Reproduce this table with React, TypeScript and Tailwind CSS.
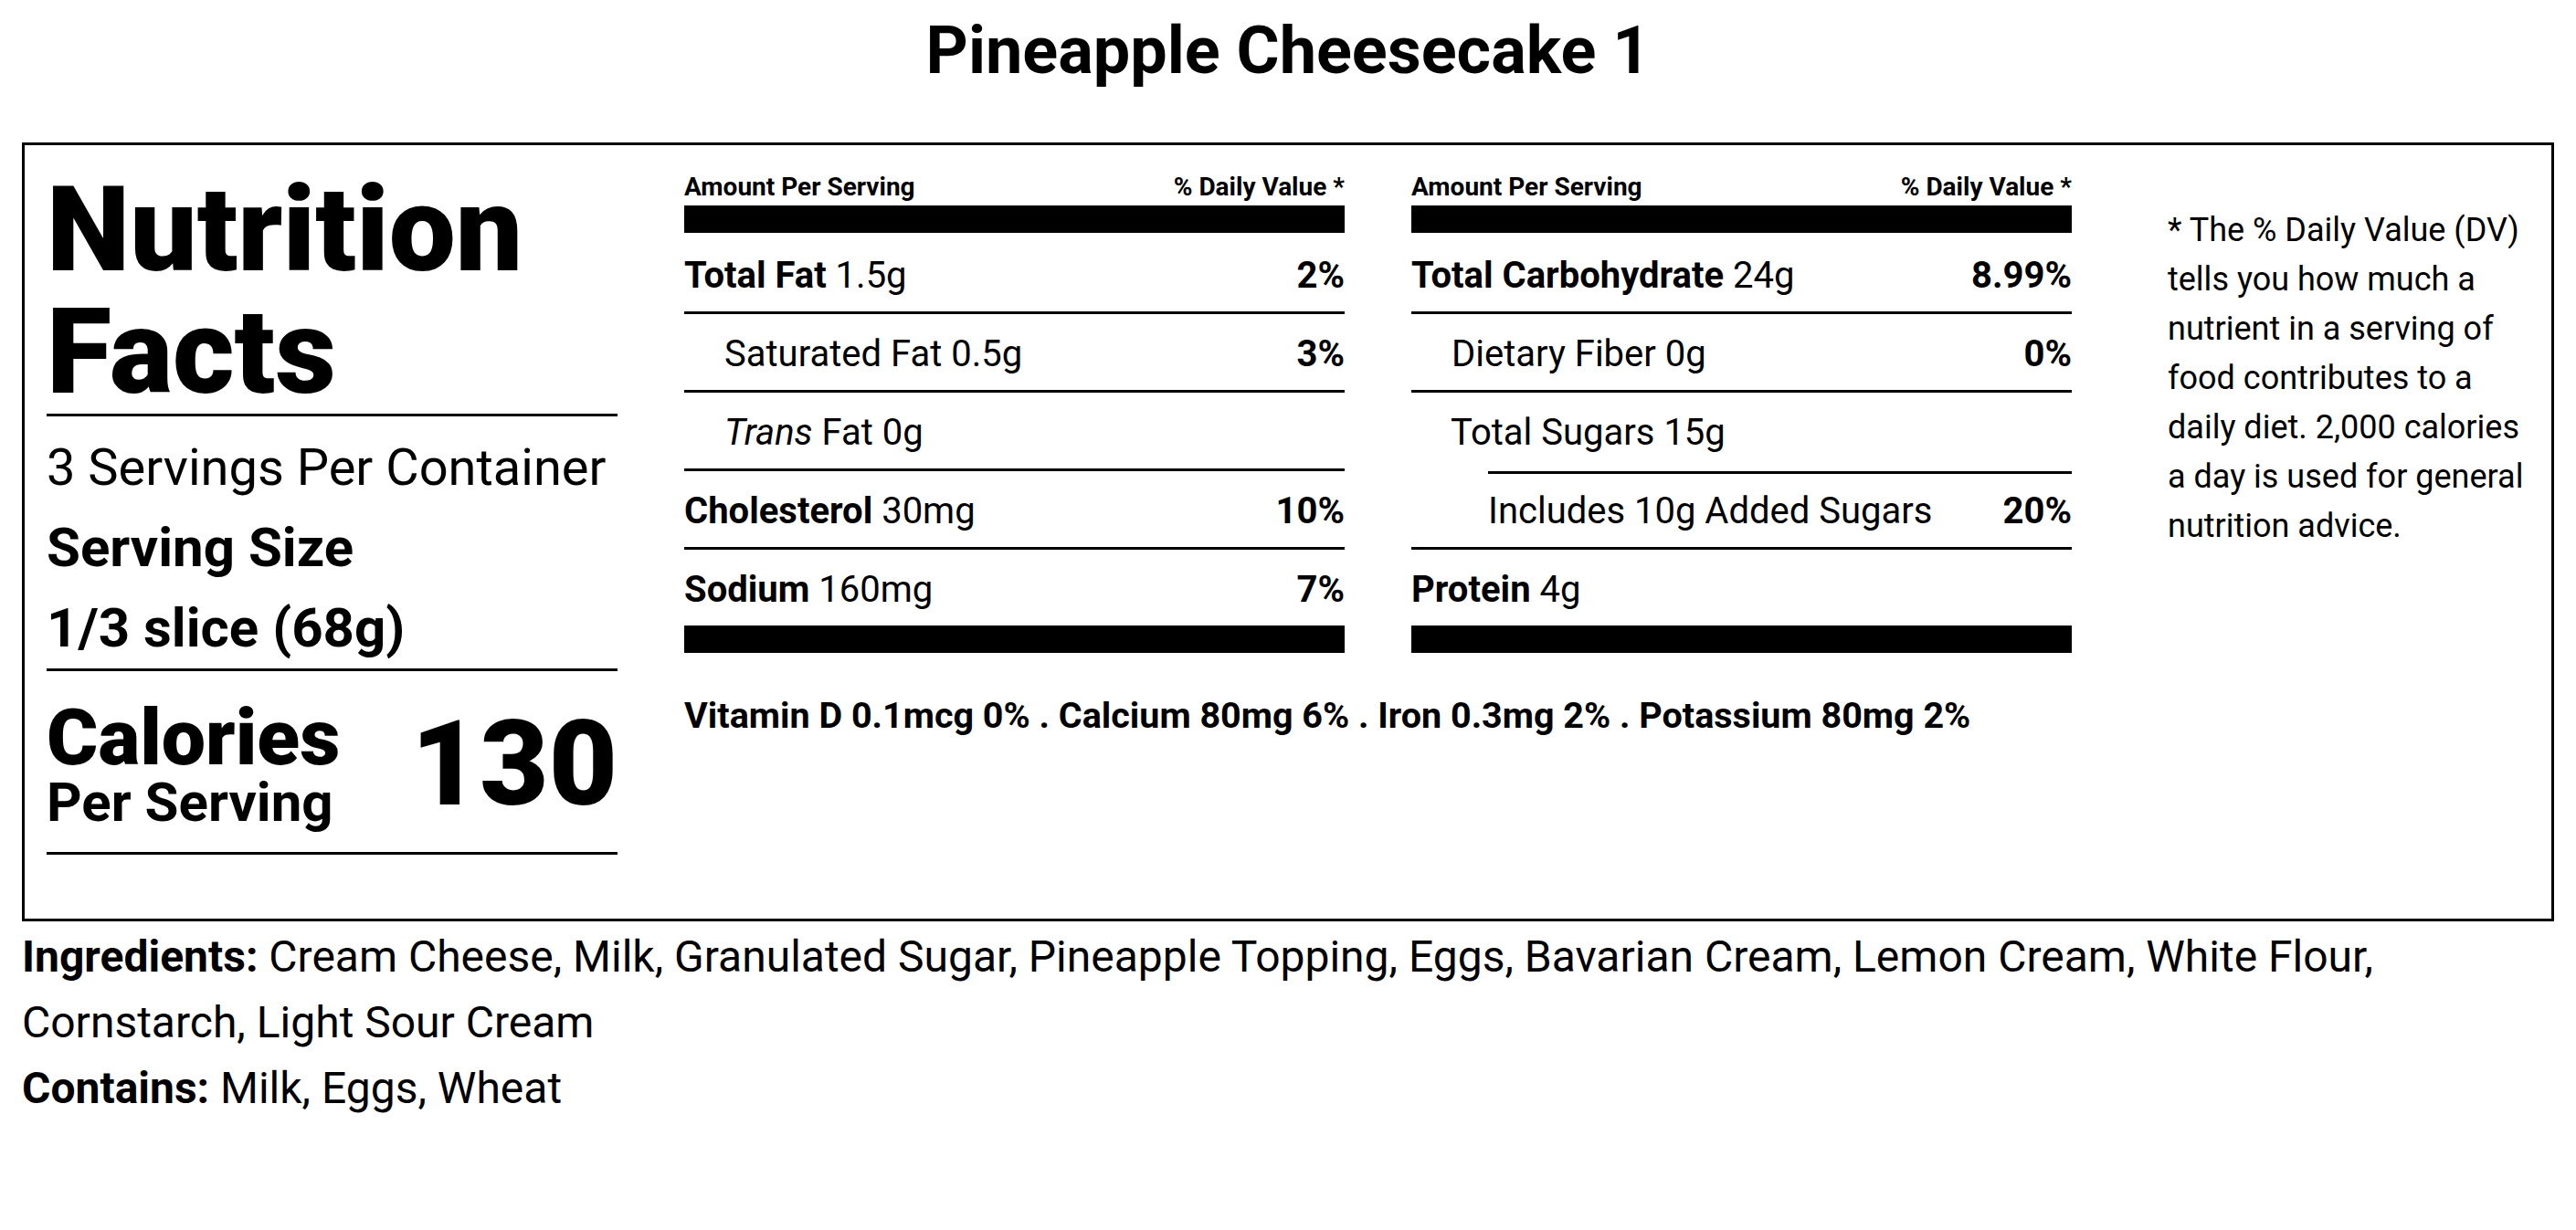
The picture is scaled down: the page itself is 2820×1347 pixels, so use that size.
const leftRows = [
  { label: "Total Fat", amount: "1.5g", dv: "2%", bold: true },
  { label: "Saturated Fat", amount: "0.5g", dv: "3%", indent: true },
  { label: "Trans", italic: true, amount: "Fat 0g", dv: "", indent: true },
  { label: "Cholesterol", amount: "30mg", dv: "10%", bold: true },
  { label: "Sodium", amount: "160mg", dv: "7%", bold: true, last: true },
];

type Row = {
  label: string;
  amount: string;
  dv: string;
  bold?: boolean;
  italic?: boolean;
  indent?: boolean;
  last?: boolean;
};

function NutrientRow({ row }: { row: Row }) {
  return (
    <div
      className={`flex items-start justify-between pt-[14px] pb-[9px] text-[40px] leading-[60px] ${
        row.last ? "" : "border-b-[3px] border-black"
      } ${row.indent ? "pl-[44px]" : ""}`}
    >
      <span className="whitespace-nowrap">
        <span className={row.bold ? "font-bold" : row.italic ? "italic" : ""}>{row.label}</span>{" "}
        {row.amount}
      </span>
      <span className="font-bold">{row.dv}</span>
    </div>
  );
}

function ColumnHeader() {
  return (
    <>
      <div className="flex justify-between text-[28px] font-bold leading-[40px]">
        <span>Amount Per Serving</span>
        <span>% Daily Value *</span>
      </div>
      <div className="mb-[3px] h-[30px] bg-black" />
    </>
  );
}

export default function App() {
  return (
    <div className="min-h-screen bg-white px-[24px] font-['Roboto',sans-serif] text-black">
      <h1 className="mb-[44px] text-center text-[72px] font-bold leading-[112px]">
        Pineapple Cheesecake 1
      </h1>

      {/* Label */}
      <div className="flex border-[3px] border-black px-[24px] pt-[26px] pb-[70px]">
        {/* Left */}
        <div className="w-[625px] shrink-0">
          <div className="border-b-[3px] border-black text-[130px] font-black leading-[134px]">
            Nutrition
            <br />
            Facts
          </div>

          <div className="mt-[12px] border-b-[3px] border-black leading-[88px]">
            <p className="text-[56px]">3 Servings Per Container</p>
            <p className="text-[60px] font-bold">Serving Size</p>
            <p className="text-[60px] font-bold">1/3 slice (68g)</p>
          </div>

          <div className="flex items-start justify-between border-b-[3px] border-black pt-[30px] pb-[26px]">
            <div>
              <p className="text-[86px] font-black leading-[86px]">Calories</p>
              <p className="text-[60px] font-bold leading-[56px]">Per Serving</p>
            </div>
            <p className="mt-[7px] text-[130px] font-black leading-[130px]">130</p>
          </div>
        </div>

        {/* Middle */}
        <div className="ml-[73px] w-[723px] shrink-0">
          <ColumnHeader />
          {leftRows.map((row) => (
            <NutrientRow key={row.label} row={row} />
          ))}
          <div className="h-[30px] bg-black" />

          <p className="mt-[39px] whitespace-nowrap text-[39.5px] font-bold leading-[60px]">
            Vitamin D 0.1mcg 0% . Calcium 80mg 6% . Iron 0.3mg 2% . Potassium 80mg 2%
          </p>
        </div>

        <div className="ml-[73px] w-[723px] shrink-0">
          <ColumnHeader />
          <NutrientRow row={{ label: "Total Carbohydrate", amount: "24g", dv: "8.99%", bold: true }} />
          <NutrientRow row={{ label: "Dietary Fiber", amount: "0g", dv: "0%", indent: true }} />
          <div className="pl-[43px] pt-[14px] pb-[12px] text-[40px] leading-[60px]">Total Sugars 15g</div>
          <div className="border-b-[3px] border-black">
            <div className="ml-[84px] flex justify-between border-t-[3px] border-black pt-[11px] pb-[9px] text-[40px] leading-[60px]">
              <span>Includes 10g Added Sugars</span>
              <span className="font-bold">20%</span>
            </div>
          </div>
          <NutrientRow row={{ label: "Protein", amount: "4g", dv: "", bold: true, last: true }} />
          <div className="h-[30px] bg-black" />
        </div>

        {/* Footnote */}
        <div className="flex-1 pl-[105px] pt-[40px]">
          <p className="whitespace-nowrap text-[36px] leading-[54px]">
            * The % Daily Value (DV)
            <br />
            tells you how much a
            <br />
            nutrient in a serving of
            <br />
            food contributes to a
            <br />
            daily diet. 2,000 calories
            <br />
            a day is used for general
            <br />
            nutrition advice.
          </p>
        </div>
      </div>

      {/* Ingredients */}
      <div className="pt-[3px] text-[48px] leading-[72px]">
        <p>
          <span className="font-bold">Ingredients:</span> Cream Cheese, Milk, Granulated Sugar, Pineapple
          Topping, Eggs, Bavarian Cream, Lemon Cream, White Flour, Cornstarch, Light Sour Cream
        </p>
        <p>
          <span className="font-bold">Contains:</span> Milk, Eggs, Wheat
        </p>
      </div>
    </div>
  );
}
